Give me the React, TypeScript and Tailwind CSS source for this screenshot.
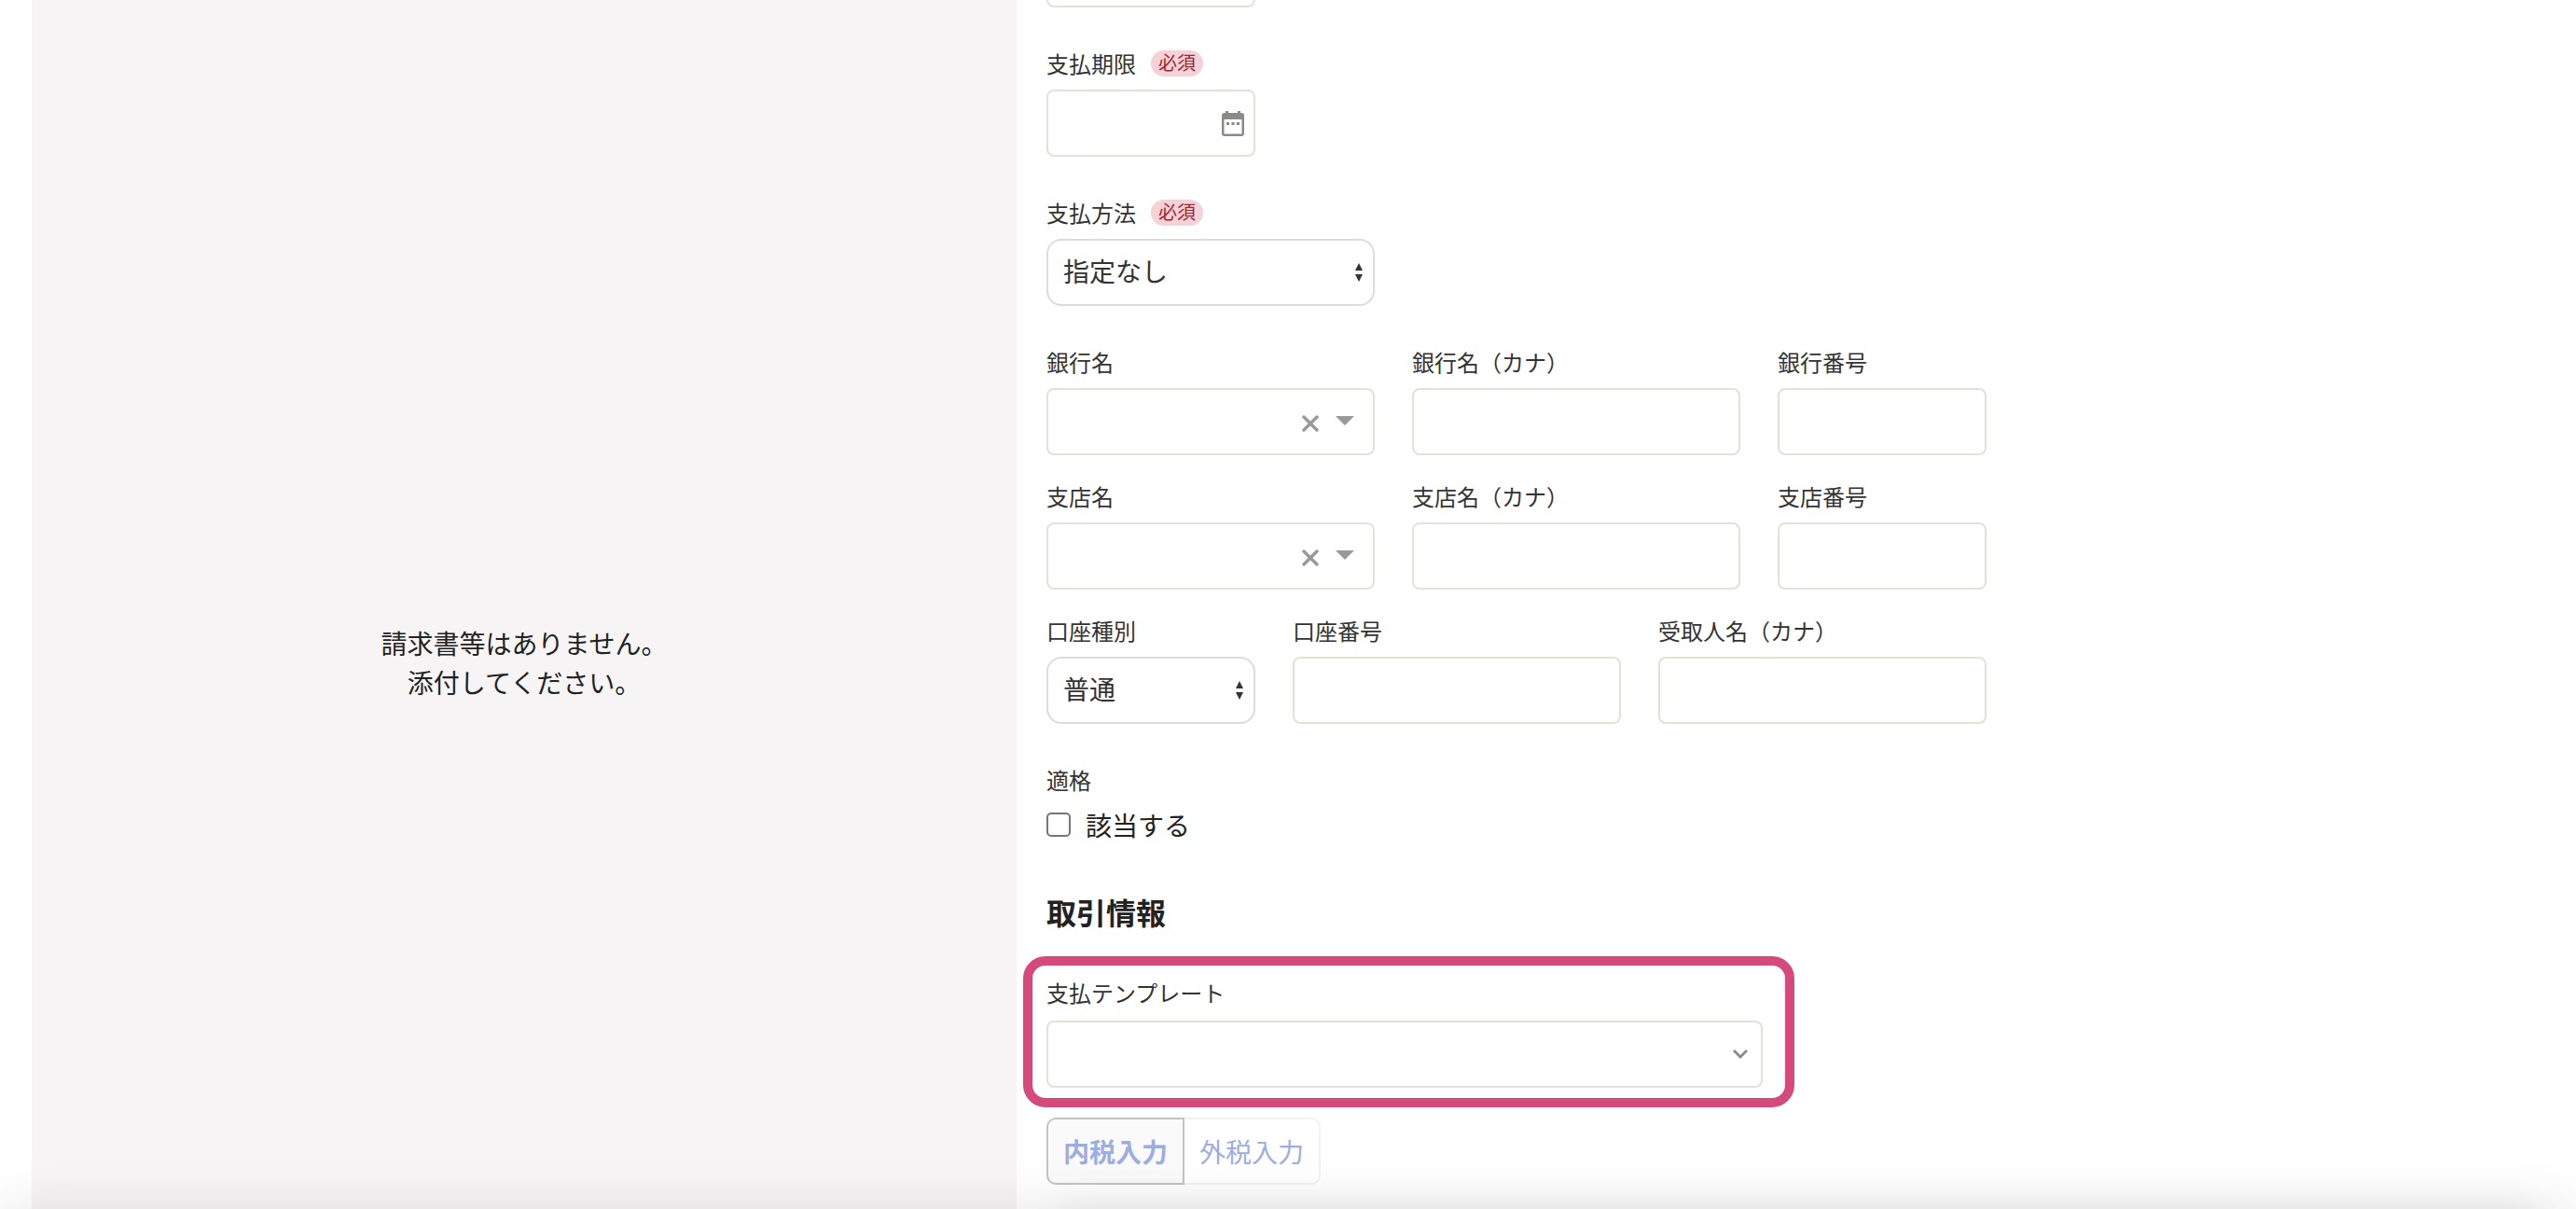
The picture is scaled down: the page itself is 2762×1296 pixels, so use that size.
import React, { useId, useState } from 'react';

const inputClass =
  "block h-[72px] rounded-lg border-2 border-[#e4e1d8] bg-white px-4 text-[28px] text-[#333] outline-none";

const CalendarIcon = () => (
  <svg className="w-6 h-[27px]" viewBox="0 0 24 27" fill="none">
    <path
      fill="#8c8989"
      fillRule="evenodd"
      d="M4 0h3v2h10V0h3v2h1a3 3 0 0 1 3 3v19a3 3 0 0 1-3 3H3a3 3 0 0 1-3-3V5a3 3 0 0 1 3-3h1zM2.500 9v15a.5.5 0 0 0 .5.5h18a.5.5 0 0 0 .5-.5V9z"
    />
    <path fill="#8c8989" d="M5 12h3v3H5zM10.500 12h3v3h-3zM16 12h3v3h-3z" />
  </svg>
);

const ClearIcon = () => (
  <svg className="w-[18px] h-[18px]" viewBox="0 0 18 18">
    <path d="M2 2l14 14M16 2L2 16" stroke="#999" strokeWidth="3.5" strokeLinecap="round" />
  </svg>
);

const CaretIcon = () => (
  <svg className="w-5 h-[10px]" viewBox="0 0 20 10">
    <path d="M0 0h20L10 10z" fill="#999" />
  </svg>
);

const UpDownIcon = () => (
  <svg className="w-2 h-5" viewBox="0 0 8 20">
    <path d="M4 0l4 8H0zM0 12h8l-4 8z" fill="#333" />
  </svg>
);

const ChevronIcon = () => (
  <svg className="w-4 h-[10px]" viewBox="0 0 16 10">
    <path d="M1 1l7 7 7-7" fill="none" stroke="#8c8989" strokeWidth="2.8" />
  </svg>
);

type LabelProps = { id: string; text: string; required?: boolean };

const FieldLabel = ({ id, text, required }: LabelProps) => (
  <div className="flex h-9 mb-2 gap-4">
    <label htmlFor={id} className="text-2xl leading-8 text-[#333]">
      {text}
    </label>
    {required && (
      <span className="mt-0.5 h-7 px-2 rounded-full bg-[#f4d2d7] text-xl leading-[26px] text-[#a32333]">
        必須
      </span>
    )}
  </div>
);

const TextField = ({ label, width }: { label: string; width: string }) => {
  const id = useId();
  return (
    <div className={width}>
      <FieldLabel id={id} text={label} />
      <input id={id} type="text" className={`${inputClass} w-full`} />
    </div>
  );
};

const ComboField = ({ label }: { label: string }) => {
  const id = useId();
  const [value, setValue] = useState('');
  return (
    <div className="w-[352px]">
      <FieldLabel id={id} text={label} />
      <div className="relative">
        <input
          id={id}
          type="text"
          role="combobox"
          aria-expanded="false"
          value={value}
          onChange={(e) => setValue(e.target.value)}
          className={`${inputClass} w-full pr-24`}
        />
        <div className="absolute inset-y-0 right-[22px] flex items-center gap-[18px]">
          <button type="button" aria-label="クリア" className="mt-1" onClick={() => setValue('')}>
            <ClearIcon />
          </button>
          <button type="button" aria-label="開く" className="mb-0.5">
            <CaretIcon />
          </button>
        </div>
      </div>
    </div>
  );
};

type SelectProps = { label: string; width: string; options: string[]; required?: boolean };

const SelectField = ({ label, width, options, required }: SelectProps) => {
  const id = useId();
  return (
    <div className={width}>
      <FieldLabel id={id} text={label} required={required} />
      <div className="relative">
        <select
          id={id}
          className="block w-full h-[72px] appearance-none rounded-2xl border-2 border-[#dcdcdc] bg-white px-4 pb-1 text-[28px] text-[#333]"
        >
          {options.map((option) => (
            <option key={option}>{option}</option>
          ))}
        </select>
        <div className="pointer-events-none absolute inset-y-0 right-[13px] flex items-center">
          <UpDownIcon />
        </div>
      </div>
    </div>
  );
};

const App = () => {
  return (
    <div
      lang="ja"
      className="relative min-h-screen overflow-hidden grid grid-cols-[1056fr_1672fr] pl-[34px] bg-white text-[#222] font-['Noto_Sans_CJK_JP',sans-serif]"
    >
      {/* Attachment preview */}
      <section className="flex flex-col items-center justify-center pt-[124px] bg-[#f6f4f5]">
        <p className="text-center text-[28px] leading-[42px]">
          請求書等はありません。
          <br />
          添付してください。
        </p>
      </section>

      {/* Invoice form */}
      <form className="relative px-8 pb-[26px]">
        <input
          type="text"
          aria-label="日付"
          className="block w-56 h-2 rounded-b-lg border-2 border-t-0 border-[#e4e1d8]"
        />

        <div className="mt-11 w-56">
          <FieldLabel id="due-date" text="支払期限" required />
          <div className="relative">
            <input id="due-date" type="text" className={`${inputClass} w-full`} />
            <button type="button" aria-label="カレンダー" className="absolute inset-y-0 right-3">
              <CalendarIcon />
            </button>
          </div>
        </div>

        <div className="mt-11">
          <SelectField label="支払方法" width="w-[352px]" options={['指定なし']} required />
        </div>

        <div className="mt-11 flex gap-10">
          <ComboField label="銀行名" />
          <TextField label="銀行名（カナ）" width="w-[352px]" />
          <TextField label="銀行番号" width="w-56" />
        </div>

        <div className="mt-7 flex gap-10">
          <ComboField label="支店名" />
          <TextField label="支店名（カナ）" width="w-[352px]" />
          <TextField label="支店番号" width="w-56" />
        </div>

        <div className="mt-7 flex gap-10">
          <SelectField label="口座種別" width="w-56" options={['普通']} />
          <TextField label="口座番号" width="w-[352px]" />
          <TextField label="受取人名（カナ）" width="w-[352px]" />
        </div>

        <fieldset className="mt-11">
          <legend className="text-2xl leading-8 text-[#333]">適格</legend>
          <label className="mt-[11px] flex h-[42px] items-center gap-4 text-[28px] leading-[42px]">
            <input
              type="checkbox"
              className="w-[26px] h-[26px] appearance-none rounded-[5px] border-2 border-[#767676] bg-white checked:bg-[#767676]"
            />
            該当する
          </label>
        </fieldset>

        {/* Transaction info */}
        <h2 className="mt-12 text-[32px] leading-[48px] font-bold">取引情報</h2>

        <div className="relative mt-[45px] w-[768px]">
          <label htmlFor="template" className="block mb-3 text-2xl leading-9 text-[#333]">
            支払テンプレート
          </label>
          <div className="relative">
            <select id="template" className={`${inputClass} w-full appearance-none`}>
              <option></option>
            </select>
            <div className="pointer-events-none absolute inset-y-0 right-4 flex items-center">
              <ChevronIcon />
            </div>
          </div>
          <div className="pointer-events-none absolute -inset-y-[21px] -left-[25px] -right-[34px] rounded-3xl border-10 border-[#d54a7a]" />
        </div>

        <div className="mt-8 flex text-[28px] text-[#9bade1]">
          <button
            type="button"
            className="h-[72px] w-[148px] rounded-l-[10px] border-2 border-[#c4c4c4] bg-[#fafafa] font-bold"
          >
            内税入力
          </button>
          <button
            type="button"
            className="h-[72px] w-[146px] rounded-r-[10px] border-2 border-l-0 border-[#f2f2f2] bg-white"
          >
            外税入力
          </button>
        </div>

        <div className="pointer-events-none absolute inset-x-12 top-full h-20 shadow-[0_0_40px_rgba(0,0,0,0.08)]" />
      </form>

      {/* Shadow cast by the footer bar under the fold */}
      <div className="pointer-events-none absolute inset-x-0 top-full h-20 shadow-[0_0_60px_rgba(0,0,0,0.1)]" />
    </div>
  );
};

export default App;
